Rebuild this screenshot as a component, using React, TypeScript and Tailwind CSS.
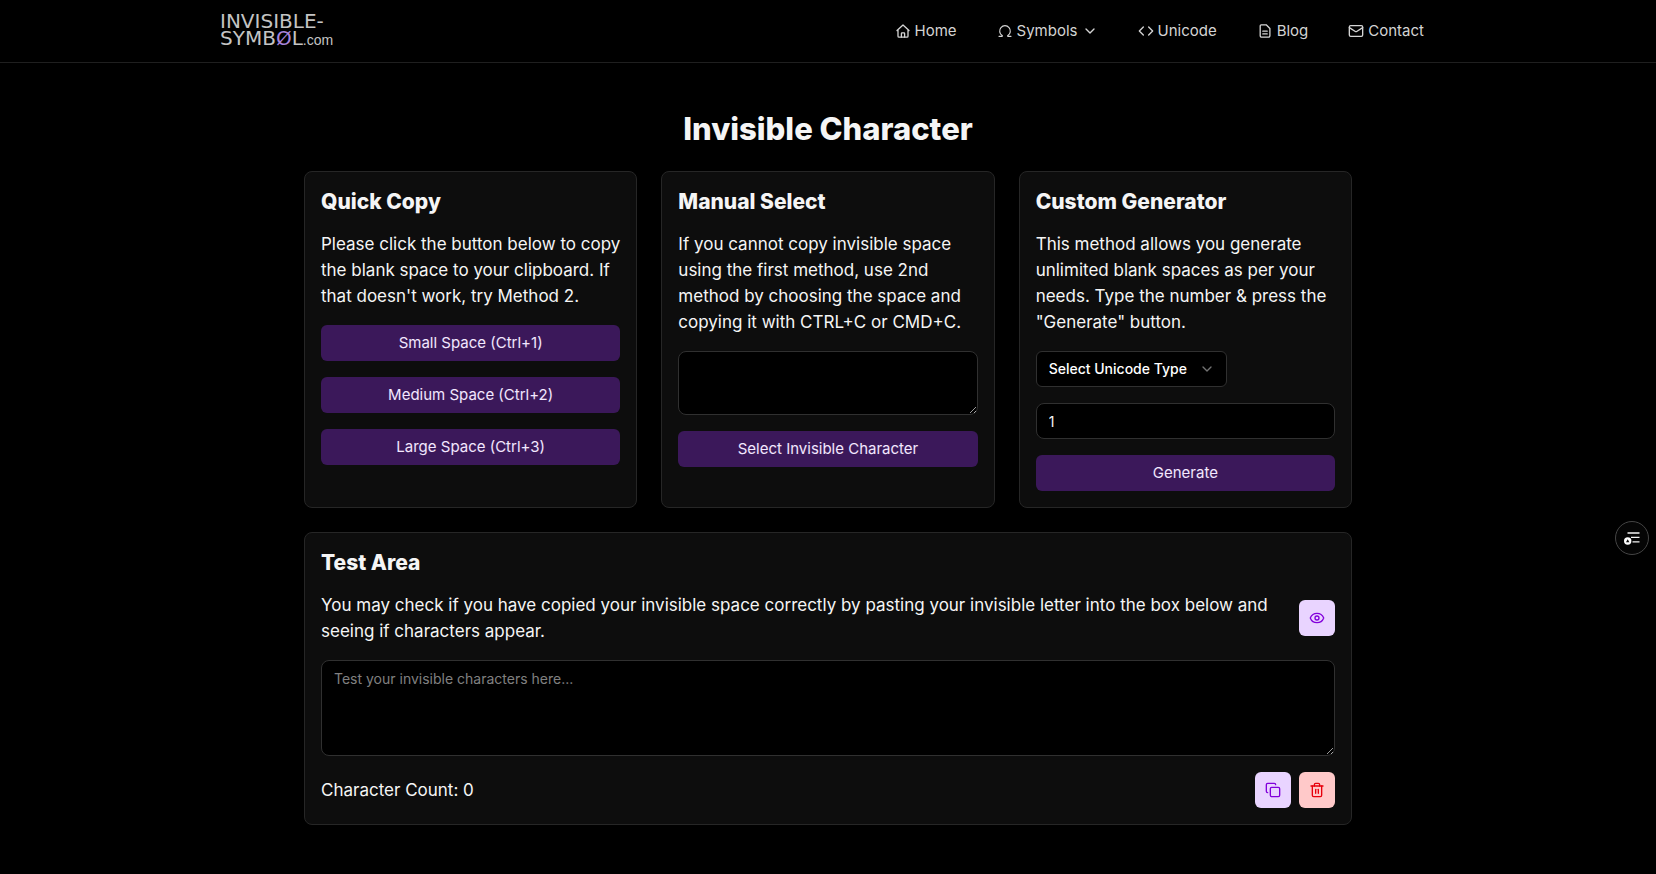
import { useRef, useState, type ReactNode } from "react";
import { ChevronDown, Code, Copy, Eye, Mail, Omega, Trash2 } from "lucide-react";

const primaryButton =
  "flex h-9 w-full items-center justify-center rounded-md bg-[#3b185a] px-4 text-[15px] text-purple-100 hover:bg-[#4a2170]";
const field =
  "w-full rounded-lg border border-[#303030] bg-black px-3 text-[14px] text-neutral-100 outline-none focus:border-neutral-500";
const navItem = "flex items-center gap-1 text-[15px] text-[#d4d4d4] hover:text-white";

function HomeIcon() {
  return (
    <svg viewBox="0 0 16 16" className="size-4" fill="none" stroke="currentColor" strokeWidth="1.3" strokeLinecap="round" strokeLinejoin="round" aria-hidden="true">
      <path d="M2 7.6 8 2l6 5.6M3 6.8v6.4a1 1 0 0 0 1 1h8a1 1 0 0 0 1-1V6.8" />
      <path d="M6.4 14v-3.6a.6.6 0 0 1 .6-.6h2a.6.6 0 0 1 .6.6V14" />
    </svg>
  );
}

function PageIcon() {
  return (
    <svg viewBox="0 0 16 16" className="size-4" fill="none" stroke="currentColor" strokeWidth="1.3" strokeLinecap="round" strokeLinejoin="round" aria-hidden="true">
      <path d="M4.2 1.8h5l3.7 3.7v7.3a1.4 1.4 0 0 1-1.4 1.4H4.6a1.4 1.4 0 0 1-1.4-1.4v-10a1 1 0 0 1 1-1z" />
      <path d="M5.8 8.2h4.4M5.8 10.9h4.4" />
    </svg>
  );
}

function OutlineIcon() {
  return (
    <svg viewBox="0 0 16 16" className="size-4" aria-hidden="true">
      <path d="M3.5 3h12M7 7.3h8.5M8.5 11.8h7" stroke="#f5f5f5" strokeWidth="1.3" />
      <circle cx="3.7" cy="11" r="3.7" fill="#fff" />
      <path d="M2 12.2h3.4L3.7 9.2z" fill="#0a0a0a" />
    </svg>
  );
}

function Logo() {
  return (
    <a
      href="#"
      className="flex flex-col font-['DejaVu_Sans',sans-serif] text-[20px] leading-[17px] text-[#c4c4c4]"
    >
      <span>INVISIBLE-</span>
      <span>
        SYMB<span className="text-[#a884dc]">Ø</span>L
        <span className="font-['Liberation_Sans',sans-serif] text-[14px]">.com</span>
      </span>
    </a>
  );
}

function Card({ title, children }: { title: string; children: ReactNode }) {
  return (
    <section className="flex flex-col gap-4 rounded-lg border border-[#262626] bg-[#0d0d0d] p-4">
      <h2 className="text-[21px] leading-[27px] font-extrabold">{title}</h2>
      {children}
    </section>
  );
}

export default function App() {
  const [test, setTest] = useState("");
  const [count, setCount] = useState("1");
  const [manual, setManual] = useState("");
  const manualRef = useRef<HTMLTextAreaElement>(null);
  const copy = (text: string) => navigator.clipboard?.writeText(text);

  return (
    <div className="min-h-screen bg-black font-['Inter',sans-serif] text-[17px] leading-[26px] text-neutral-100">
      <header className="border-b border-[#1f1f1f]">
        <div className="mx-auto flex h-[62px] max-w-[1216px] items-center justify-between pr-3">
          <Logo />
          <nav className="flex items-center gap-10">
            <a href="#" className={navItem}>
              <HomeIcon />
              Home
            </a>
            <button type="button" className={navItem}>
              <Omega className="size-4" strokeWidth={1.75} />
              Symbols
              <ChevronDown className="size-4" />
            </button>
            <a href="#" className={navItem}>
              <Code className="size-4" />
              Unicode
            </a>
            <a href="#" className={navItem}>
              <PageIcon />
              Blog
            </a>
            <a href="#" className={navItem}>
              <Mail className="size-4" />
              Contact
            </a>
          </nav>
        </div>
      </header>

      <main className="mx-auto max-w-[1048px] pt-[46px] pb-12">
        <h1 className="mb-[22px] text-center text-[31px] leading-10 font-extrabold">Invisible Character</h1>

        <div className="grid gap-6 md:grid-cols-3">
          <Card title="Quick Copy">
            <p className="-mr-2">
              Please click the button below to copy the blank space to your clipboard. If that doesn't work, try Method 2.
            </p>
            <button type="button" className={primaryButton} onClick={() => copy("\u200B")}>
              Small Space (Ctrl+1)
            </button>
            <button type="button" className={primaryButton} onClick={() => copy("\u3164")}>
              Medium Space (Ctrl+2)
            </button>
            <button type="button" className={primaryButton} onClick={() => copy("\u2003")}>
              Large Space (Ctrl+3)
            </button>
          </Card>

          <Card title="Manual Select">
            <p>
              If you cannot copy invisible space using the first method, use 2nd method by choosing the space and copying it
              with CTRL+C or CMD+C.
            </p>
            <textarea
              ref={manualRef}
              aria-label="Invisible character"
              value={manual}
              onChange={(e) => setManual(e.target.value)}
              className={`${field} block h-16 py-2`}
            />
            <button type="button" className={primaryButton} onClick={() => manualRef.current?.select()}>
              Select Invisible Character
            </button>
          </Card>

          <Card title="Custom Generator">
            <p>
              This method allows you generate unlimited blank spaces as per your needs. Type the number &amp; press the
              "Generate" button.
            </p>
            <div className="relative w-[191px]">
              <select
                aria-label="Unicode type"
                defaultValue=""
                className="h-9 w-full appearance-none rounded-md border border-[#303030] bg-black pr-8 pl-3 text-[14px] font-medium text-white outline-none"
              >
                <option value="">Select Unicode Type</option>
                <option value="200B">U+200B</option>
                <option value="3164">U+3164</option>
              </select>
              <ChevronDown className="pointer-events-none absolute top-2.5 right-3 size-4 text-neutral-500" />
            </div>
            <input
              type="text"
              inputMode="numeric"
              aria-label="Number of characters"
              value={count}
              onChange={(e) => setCount(e.target.value)}
              className={`${field} h-9`}
            />
            <button type="button" className={primaryButton} onClick={() => copy("\u3164".repeat(Number(count) || 1))}>
              Generate
            </button>
          </Card>
        </div>

        <div className="mt-6">
          <Card title="Test Area">
            <div className="flex items-center justify-between gap-6">
              <p className="max-w-[950px]">
                You may check if you have copied your invisible space correctly by pasting your invisible letter into the box
                below and seeing if characters appear.
              </p>
              <button
                type="button"
                aria-label="Reveal characters"
                className="flex size-9 shrink-0 items-center justify-center rounded-md bg-purple-200 text-purple-700"
              >
                <Eye className="size-4" />
              </button>
            </div>
            <textarea
              aria-label="Test area"
              placeholder="Test your invisible characters here..."
              value={test}
              onChange={(e) => setTest(e.target.value)}
              className={`${field} block h-24 py-2 leading-5 placeholder:text-[#808080]`}
            />
            <div className="flex items-center justify-between">
              <p>Character Count: {test.length}</p>
              <div className="flex gap-2">
                <button
                  type="button"
                  aria-label="Copy text"
                  onClick={() => copy(test)}
                  className="flex size-9 items-center justify-center rounded-md bg-purple-200 text-purple-700"
                >
                  <Copy className="size-4" />
                </button>
                <button
                  type="button"
                  aria-label="Clear text"
                  onClick={() => setTest("")}
                  className="flex size-9 items-center justify-center rounded-md bg-red-200 text-red-600"
                >
                  <Trash2 className="size-4" />
                </button>
              </div>
            </div>
          </Card>
        </div>
      </main>

      <button
        type="button"
        aria-label="Table of contents"
        className="fixed top-[521px] right-[7px] flex size-[34px] items-center justify-center rounded-full border border-[#454545] bg-[#050505]"
      >
        <OutlineIcon />
      </button>
    </div>
  );
}
